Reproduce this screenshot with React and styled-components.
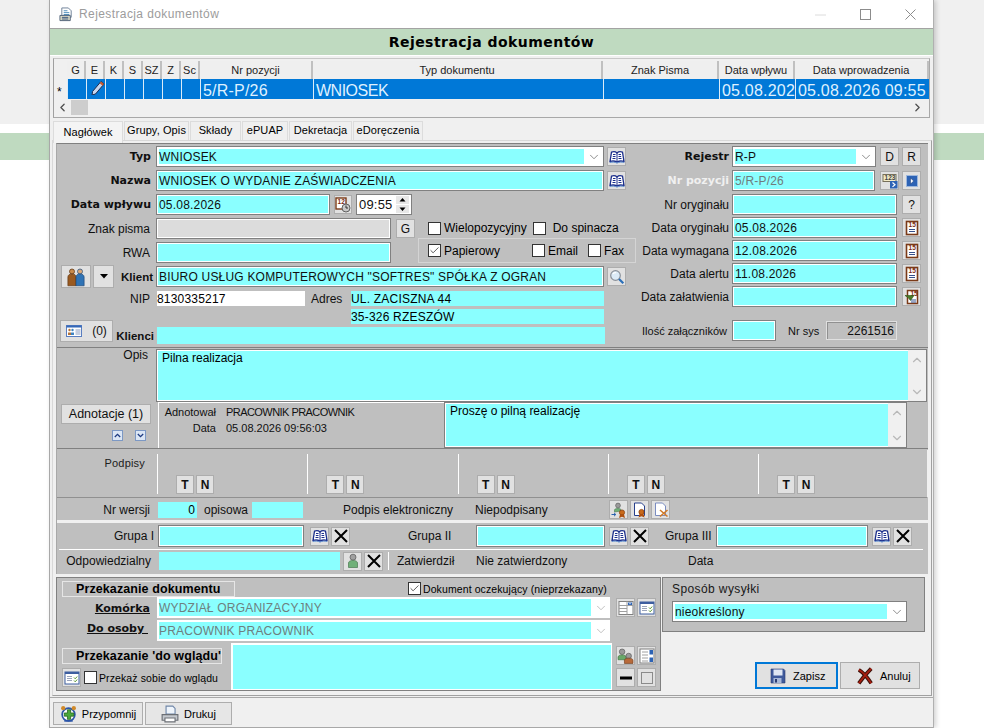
import styled, { createGlobalStyle } from "styled-components";
import { ChevronDown, ChevronUp, ChevronLeft, ChevronRight, Check } from "lucide-react";

const CYAN = "#8affff";
const GREY = "#bfbfbf";
const FONT = `"Liberation Sans", Arial, sans-serif`;

const Global = createGlobalStyle`
  html, body { margin: 0; padding: 0; background: #fff; overflow: hidden; }
  * { box-sizing: border-box; }
  body { font-family: ${FONT}; font-size: 12px; letter-spacing: .2px; color: #000; }
`;

/* ---------- icons ---------- */

const Svg = ({ size = 16, children }) => (
  <svg width={size} height={size} viewBox="0 0 16 16" fill="none">{children}</svg>
);

const BookIcon = () => (
  <Svg>
    <path d="M8 4C6.5 2.6 4 2.6 2.5 3.2L1 12.5c2.4-.8 5-.6 7 .6 2-1.2 4.6-1.4 7-.6L13.5 3.2C12 2.6 9.5 2.6 8 4z" fill="#fff" stroke="#1c2f8c" strokeWidth="1.3" />
    <path d="M8 4v9M4 5.5h2.5M3.8 7.5h2.7M3.5 9.5h3M9.5 5.5H12M9.5 7.5h2.7M9.5 9.5h3" stroke="#1c2f8c" />
    <path d="M1 13.5c2.5-.7 5-.4 7 .6 2-1 4.5-1.3 7-.6" stroke="#5f8fd0" />
  </Svg>
);

const CrossIcon = () => (
  <Svg>
    <path d="M2 2L14 14M14 2L2 14" stroke="#000" strokeWidth="2" />
  </Svg>
);

const TinyNum = ({ x, y, fill, children }) => (
  <text x={x} y={y} fontFamily="Liberation Sans" fontSize="6.5" fontWeight="700" letterSpacing="0" fill={fill}>{children}</text>
);

const CalendarIcon = () => (
  <Svg>
    <rect x="2.5" y="1.5" width="11" height="13" fill="#fff" stroke="#7a3a18" strokeWidth="1.6" />
    <TinyNum x={4.6} y={7.4} fill="#7a2a10">15</TinyNum>
    <path d="M5 9.5h6M5 11.5h6" stroke="#35508c" />
  </Svg>
);

const CalendarDoneIcon = () => (
  <Svg>
    <rect x="3.5" y="1.5" width="10" height="13" fill="#fff" stroke="#7a3a18" strokeWidth="1.5" />
    <TinyNum x={6.4} y={7} fill="#7a2a10">15</TinyNum>
    <path d="M7 11h5M7 13h5" stroke="#35508c" />
    <path d="M1 6.5h9l-3.5 5L4 8.5z" fill="#4b7a28" stroke="#2e5214" strokeWidth=".6" />
  </Svg>
);

const CalendarClockIcon = () => (
  <Svg>
    <rect x="1" y="1" width="10" height="11" fill="#fff" stroke="#7a3a18" strokeWidth="1.4" />
    <TinyNum x={2.6} y={7} fill="#7a2a10">12</TinyNum>
    <circle cx="11" cy="11" r="4" fill="#c8c8c8" stroke="#606060" />
    <path d="M11 8.5V11h2" stroke="#303030" />
  </Svg>
);

const NumberIcon = () => (
  <Svg>
    <rect x="1" y="1.5" width="13" height="7" fill="#f3ecc8" stroke="#77705a" />
    <TinyNum x={2.6} y={7} fill="#444">123</TinyNum>
    <rect x="8" y="8" width="7.5" height="7.5" fill="#2d63b5" />
    <path d="M10.5 9.5l2.5 2.2-2.5 2.2" stroke="#fff" strokeWidth="1.2" />
  </Svg>
);

const BlueNextIcon = () => (
  <Svg>
    <rect x="2.5" y="2.5" width="11" height="11" fill="#2d63b5" stroke="#9db7dc" />
    <path d="M6.5 5l3.2 3-3.2 3z" fill="#fff" stroke="#10306e" strokeWidth=".5" />
  </Svg>
);

const SearchIcon = () => (
  <Svg>
    <circle cx="6.5" cy="6.5" r="4.8" fill="#dcebf7" stroke="#8a9098" strokeWidth="1.2" />
    <path d="M4 5c.6-1.2 2-1.6 3.2-1.2" stroke="#fff" strokeWidth="1.2" />
    <path d="M10 10l4.3 4.3" stroke="#2b6fb8" strokeWidth="2.2" />
  </Svg>
);

const PeopleIcon = ({ size = 20 }) => (
  <Svg size={size}>
    <circle cx="4.8" cy="3.6" r="2" fill="#c98a4a" stroke="#5d3514" strokeWidth=".6" />
    <path d="M1.5 15V8c0-1.5 1.2-2.4 3.3-2.4S8 6.5 8 8v7z" fill="#9a5a20" stroke="#5d3514" strokeWidth=".5" />
    <circle cx="11.2" cy="3.6" r="2" fill="#d9a878" stroke="#244f80" strokeWidth=".6" />
    <path d="M8 15V8c0-1.5 1.2-2.4 3.2-2.4s3.3.9 3.3 2.4v7z" fill="#2f73b5" stroke="#1d4470" strokeWidth=".5" />
  </Svg>
);

const ClientCardIcon = () => (
  <Svg>
    <rect x=".5" y="2.5" width="15" height="11" fill="#fff" stroke="#5a7ec0" />
    <rect x=".5" y="2.5" width="15" height="2" fill="#3568b8" />
    <circle cx="3.5" cy="7" r="1.2" fill="#b5743a" />
    <path d="M2 12V9.5h3V12z" fill="#b5743a" />
    <circle cx="6.5" cy="7" r="1.2" fill="#3d83c2" />
    <path d="M5 12V9.5h3V12z" fill="#3d83c2" />
    <path d="M9.5 7h5M9.5 9h5M9.5 11h5" stroke="#8a9cc0" />
  </Svg>
);

const SmallArrowIcon = ({ down }) => (
  <svg width="11" height="11" viewBox="0 0 11 11" fill="none">
    <rect x=".5" y=".5" width="10" height="10" fill="#dbe6f5" stroke="#7c98c4" />
    <path d={down ? "M2.8 4l2.7 2.7L8.2 4" : "M2.8 7l2.7-2.7L8.2 7"} stroke="#1d3a80" strokeWidth="1.3" />
  </svg>
);

const Seal = ({ x, y }) => (
  <g>
    <circle cx={x} cy={y} r="2.6" fill="#c96a1c" stroke="#803a0c" strokeWidth=".7" />
    <path d={`M${x - 2} ${y + 2}l-1 3.4 3-1.2 3 1.2-1-3.4`} fill="#b0500f" />
  </g>
);

const SignUserIcon = () => (
  <Svg>
    <circle cx="7" cy="3.5" r="2.4" fill="#9a9a9a" stroke="#555" strokeWidth=".6" />
    <path d="M3.5 10V8c0-1 1.5-1.5 3.5-1.5S10 7 10 8v1z" fill="#70b078" stroke="#4a7a50" strokeWidth=".6" />
    <path d="M.5 12.5h4M3 10.8l1.8 1.7L3 14.2" stroke="#2760b0" strokeWidth="1" />
    <Seal x={11} y={10.5} />
  </Svg>
);

const SignDocIcon = () => (
  <Svg>
    <path d="M2.5 1h7l3 3v9.5h-10z" fill="#fff" stroke="#27408c" />
    <Seal x={9.5} y={10} />
  </Svg>
);

const UnsignDocIcon = () => (
  <Svg>
    <path d="M2.5 1h7l3 3v9.5h-10z" fill="#fff" stroke="#7a8cc0" />
    <path d="M7 8l7.5 6.5M14.5 8L7 14.5" stroke="#d07a28" strokeWidth="1.6" />
  </Svg>
);

const PersonIcon = () => (
  <Svg>
    <circle cx="8" cy="4.2" r="3" fill="#a0a0a0" stroke="#555" strokeWidth=".7" />
    <path d="M3.5 14.5V10c0-1.6 2-2.6 4.5-2.6s4.5 1 4.5 2.6v4.5z" fill="#70b078" stroke="#4a7a50" strokeWidth=".7" />
  </Svg>
);

const TwoPersonsIcon = () => (
  <Svg size={18}>
    <circle cx="4.8" cy="4" r="2.6" fill="#9a9a9a" stroke="#555" strokeWidth=".6" />
    <path d="M1 11.5V9c0-1.2 1.6-2 3.8-2s3.8.8 3.8 2v2.5z" fill="#68a868" stroke="#3f703f" strokeWidth=".6" />
    <circle cx="11" cy="8" r="2.6" fill="#9a9a9a" stroke="#555" strokeWidth=".6" />
    <path d="M7 15v-3c0-1.2 1.8-2 4-2s4 .8 4 2v3z" fill="#b86a3a" stroke="#703c1c" strokeWidth=".6" />
  </Svg>
);

const ListCheckIcon = () => (
  <Svg>
    <rect x="1" y="2" width="14" height="12" fill="#fff" stroke="#3d5ea0" />
    <rect x="1" y="2" width="14" height="2" fill="#3d5ea0" />
    <path d="M3 6.5h5M3 8.5h5M3 10.5h5" stroke="#9aa4bc" strokeWidth="1.2" />
    <path d="M10 7.5l1.2 1.3 2-2.3M10 10.5l1.2 1.3 2-2.3" stroke="#5a9a30" />
  </Svg>
);

const ComboListIcon = () => (
  <Svg>
    <rect x="1" y="1.5" width="14" height="13" fill="#fff" stroke="#808080" />
    <path d="M1 5.5h14M1 8.5h8M1 11.5h8M9 1.5v13" stroke="#a0a0a0" />
    <rect x="10" y="2.5" width="4" height="2.5" fill="#2d63b5" />
    <path d="M11 3.2h2l-1 1.2z" fill="#fff" />
  </Svg>
);

const SpinListIcon = () => (
  <Svg>
    <rect x="1" y="1" width="14" height="14" fill="#fff" stroke="#808080" />
    <path d="M3 4h6M3 7h6M3 10h6M3 13h6" stroke="#a0a0a0" />
    <rect x="10.5" y="2" width="3.5" height="4.5" fill="#2d63b5" />
    <rect x="10.5" y="9.5" width="3.5" height="4.5" fill="#2d63b5" />
  </Svg>
);

const MinusIcon = () => (
  <Svg><rect x="2" y="6.5" width="12" height="3" fill="#000" /></Svg>
);

const EmptyBoxIcon = () => (
  <Svg><rect x="2.5" y="2.5" width="11" height="11" stroke="#8a8a8a" /></Svg>
);

const FloppyIcon = () => (
  <Svg size={16}>
    <path d="M1 1h12.5L15 2.5V15H1z" fill="#3f5a9c" stroke="#2a3a70" strokeWidth=".6" />
    <rect x="3.5" y="1.5" width="9" height="6" fill="#dfe6f3" />
    <rect x="3.5" y="10" width="8" height="5" fill="#a8b8d8" />
    <rect x="5" y="11" width="2" height="3.5" fill="#2a3a70" />
  </Svg>
);

const RedCrossIcon = () => (
  <Svg size={18}>
    <path d="M2.5 2.5C7 5 10 9 13.5 14.5M13.5 1.5C10 5 6 9.5 2.5 14.5" stroke="#3c1008" strokeWidth="3.4" />
    <path d="M2.5 2.5C7 5 10 9 13.5 14.5M13.5 1.5C10 5 6 9.5 2.5 14.5" stroke="#a81e10" strokeWidth="1.6" />
  </Svg>
);

const ReminderIcon = () => (
  <Svg size={17}>
    <circle cx="8" cy="9" r="6" fill="#ffffff" stroke="#2b55a8" strokeWidth="1.6" />
    <circle cx="3" cy="3" r="2" fill="#d08a2a" />
    <circle cx="13" cy="3" r="2" fill="#d08a2a" />
    <path d="M4 7.5h3V4.5h3v3h3v3h-3v3H7v-3H4z" fill="#4aa83c" stroke="#1e5c18" strokeWidth=".7" />
    <path d="M4 15h8" stroke="#2b55a8" strokeWidth="1.4" />
  </Svg>
);

const PrinterIcon = () => (
  <Svg size={18}>
    <path d="M4.5 1h6l2 2v5h-8z" fill="#eef4fb" stroke="#6f86a8" />
    <path d="M1 8.5h14v5H1z" fill="#c4c8ce" stroke="#6b6f75" />
    <path d="M3.5 11.5h9v3.5h-9z" fill="#fff" stroke="#6b6f75" />
  </Svg>
);

const TitleDocIcon = () => (
  <Svg size={15}>
    <path d="M3 1h7l3 3v7H3z" fill="#fff" stroke="#6c7f96" />
    <path d="M5 4h4M5 6h6M5 8h6" stroke="#4a8ab8" />
    <path d="M1 9h11v5.5H1z" fill="#e6e2c8" stroke="#4d5f78" />
    <path d="M3 11h7M3 12.8h7" stroke="#2a4a78" />
  </Svg>
);

/* ---------- window chrome ---------- */

const Desktop = styled.div`
  width: 984px;
  height: 728px;
  padding-left: 49px;
  overflow: hidden;
  background: linear-gradient(#f0f0f0 0 124px, #fff 124px 133px, #bfdac0 133px 160px, #fff 160px);
`;

const Window = styled.div`
  width: 885px;
  height: 728px;
  display: flex;
  flex-direction: column;
  background: #f0f0f0;
  border-left: 1px solid #a8a8a8;
  border-right: 1px solid #b0b0b0;
  box-shadow: 2px 0 5px rgba(0, 0, 0, .18);
`;

const TitleBar = styled.div`
  height: 28px;
  flex: none;
  display: flex;
  align-items: center;
  padding-left: 9px;
  background: #fff;
  color: #9c9c9c;
  letter-spacing: .4px;
`;

const TitleText = styled.span`
  margin-left: 5px;
  flex: 1;
`;

const WinControls = styled.div`
  display: flex;
  align-items: center;
  width: 118px;
  gap: 34px;
`;

const Header = styled.div`
  height: 28px;
  flex: none;
  display: flex;
  align-items: center;
  justify-content: center;
  padding-bottom: 1px;
  background: #bfdac0;
  border-top: 1px solid #a3a3a3;
  border-bottom: 1px solid #fff;
  font-family: "DejaVu Sans", sans-serif;
  font-weight: 700;
  font-size: 14px;
  letter-spacing: .45px;
`;

const GridWrap = styled.div`
  margin: 2px 3px 0 3px;
  height: 60px;
  flex: none;
  padding: 2px 0 0 0;
  background: #f0f0f0;
  border: 1px solid #a8a8a8;
  border-top: 1px solid #c8c8c8;
  border-left: 1px solid #a0a0a0;
  display: flex;
  flex-direction: column;
`;

const GridRow = styled.div`
  display: grid;
  grid-template-columns: 13px repeat(7, 19px) 113px 290px 116px 76px 134px;
  height: ${(p) => p.$h}px;
  flex: none;
`;

const HeadCell = styled.div`
  display: flex;
  align-items: center;
  justify-content: center;
  overflow: hidden;
  white-space: nowrap;
  background: #efefef;
  border-right: 2px solid #c0c0c0;
  font-size: 11px;
  letter-spacing: 0;
  color: #222;
`;

const Blank = styled.div``;

const Marker = styled.div`
  padding: 6px 0 0 3px;
  font-size: 12px;
  line-height: 14px;
`;

const DataCell = styled.div`
  background: #0078d7;
  border-left: 1px solid #dcecf8;
  color: #dff1ff;
  font-size: 16px;
  padding-left: 2px;
  line-height: 24px;
  height: 20px;
  white-space: nowrap;
  overflow: hidden;
  letter-spacing: ${(p) => (p.$tight ? "-.5px" : ".2px")};
`;

const PencilSvg = styled.svg`
  display: block;
  margin: 1px 0 0 2px;
`;

const HScroll = styled.div`
  height: 16px;
  display: flex;
  align-items: center;
  padding: 0 5px 0 2px;
  color: #505050;
`;

const Thumb = styled.div`
  width: 17px;
  height: 15px;
  background: #cdcdcd;
  margin-left: 2px;
  flex: none;
`;

const Fill = styled.div`
  flex: 1;
`;

const Tabs = styled.div`
  display: flex;
  height: 22px;
  flex: none;
  padding: 2px 0 0 3px;
  align-items: flex-end;
`;

const Tab = styled.div`
  display: flex;
  align-items: center;
  justify-content: center;
  width: ${(p) => p.$w}px;
  height: ${(p) => (p.$active ? 22 : 19)}px;
  margin-right: 1px;
  background: ${(p) => (p.$active ? "#f4f4f4" : "#efefef")};
  border: 1px solid #dcdcdc;
  border-bottom: none;
  margin-bottom: ${(p) => (p.$active ? -3 : 0)}px;
  z-index: ${(p) => (p.$active ? 1 : 0)};
  font-size: 11px;
  letter-spacing: .1px;
  padding-bottom: 2px;
`;

const TabBody = styled.div`
  margin: 0 1px 0 2px;
  flex: none;
  height: 556px;
  padding: 2px 3px 0 3px;
  border: 1px solid #d8d8d8;
  border-right: 1px solid #a0a0a0;
  border-bottom: 1px solid #a0a0a0;
  background: #f0f0f0;
`;

const Footer = styled.div`
  flex: 1;
  display: flex;
  gap: 2px;
  padding: 4px 0 0 3px;
  border-top: 1px solid #a8a8a8;
  border-bottom: 1px solid #a8a8a8;
  margin-top: 1px;
`;

const FooterBtn = styled.button`
  width: ${(p) => p.$w}px;
  height: 23px;
  display: flex;
  align-items: center;
  justify-content: center;
  gap: 5px;
  padding: 0;
  background: #e6e6e6;
  border: 1px solid #adadad;
  font: inherit;
  font-size: 11px;
  letter-spacing: 0;
`;

/* ---------- form parts ---------- */

const FormPanel = styled.div`
  height: 431px;
  background: ${GREY};
  border-top: 1px solid #808080;
  border-left: 1px solid #a8a8a8;
  display: flex;
  flex-direction: column;
`;

const TopArea = styled.div`
  height: 203px;
  flex: none;
  display: flex;
  padding-top: 2px;
`;

const LeftCol = styled.div`
  width: 573px;
  flex: none;
`;

const RightCol = styled.div`
  flex: 1;
`;

const Row = styled.div`
  display: flex;
  align-items: ${(p) => p.$align || "center"};
  height: ${(p) => p.$h || 21}px;
  margin-top: ${(p) => p.$mt || 0}px;
`;

const Label = styled.div`
  flex: none;
  width: ${(p) => p.$w}px;
  margin-left: ${(p) => p.$ml || 0}px;
  margin-right: ${(p) => (p.$mr === undefined ? 6 : p.$mr)}px;
  padding-top: ${(p) => p.$pt || 0}px;
  padding-bottom: ${(p) => p.$pb || 0}px;
  text-align: ${(p) => p.$ta || "right"};
  white-space: nowrap;
  color: ${(p) => p.$color || "#101010"};
  font-size: ${(p) => p.$fs || 12}px;
  letter-spacing: 0;
`;

const BoldLabel = styled(Label)`
  font-family: ${(p) => (p.$small ? FONT : `"DejaVu Sans", sans-serif`)};
  font-size: ${(p) => (p.$small ? 11.5 : 11)}px;
  font-weight: 700;
  text-decoration: ${(p) => (p.$u ? "underline" : "none")};
`;

const OpisLabel = styled(Label)`
  line-height: 12px;
`;

const Field = styled.div`
  flex: none;
  width: ${(p) => p.$w}px;
  height: ${(p) => (p.$h ? `${p.$h}px` : "100%")};
  margin-left: ${(p) => p.$ml || 0}px;
  padding: 0 0 0 2px;
  background: ${(p) => p.$bg || CYAN};
  border: 1px solid #808080;
  box-shadow: inset 0 0 0 1px #fff;
  display: flex;
  align-items: center;
  white-space: nowrap;
  overflow: hidden;
  color: ${(p) => p.$color || "#101010"};
`;

const SysField = styled(Field)`
  border-color: #e0e0e0;
  box-shadow: inset 1px 1px 0 #909090;
  letter-spacing: 0;
  padding-right: 2px;
  justify-content: flex-end;
`;

const FlatField = styled.div`
  flex: none;
  width: ${(p) => p.$w}px;
  height: 100%;
  margin-left: ${(p) => p.$ml || 0}px;
  padding: 0 ${(p) => (p.$right ? 2 : 0)}px;
  background: ${(p) => p.$bg || CYAN};
  display: flex;
  align-items: center;
  justify-content: ${(p) => (p.$right ? "flex-end" : "flex-start")};
  white-space: nowrap;
`;

const Combo = styled.div`
  flex: none;
  width: ${(p) => p.$w}px;
  height: 100%;
  margin-left: ${(p) => p.$ml || 0}px;
  padding: 2px 0 2px 2px;
  display: flex;
  background: #fff;
  border: ${(p) => (p.$flat ? "0" : "1px solid #808080")};
`;

const ComboValue = styled.div`
  flex: 1;
  display: flex;
  align-items: center;
  background: ${CYAN};
  white-space: nowrap;
  color: ${(p) => p.$color || "#101010"};
`;

const TimeValue = styled(ComboValue)`
  background: #fff;
  font-size: 13px;
`;

const ComboArrow = styled.div`
  width: 19px;
  flex: none;
  display: flex;
  align-items: center;
  justify-content: center;
  color: ${(p) => p.$color || "#606060"};
`;

const IconBtn = styled.button`
  flex: none;
  width: ${(p) => p.$w || 19}px;
  height: ${(p) => p.$h || 19}px;
  margin-left: ${(p) => p.$ml || 0}px;
  padding: 0;
  display: flex;
  align-items: center;
  justify-content: center;
  gap: ${(p) => p.$gap || 0}px;
  background: #e1e1e1;
  border: 1px solid #adadad;
  font: inherit;
  font-size: ${(p) => p.$fs || 12}px;
  font-weight: ${(p) => (p.$bold ? 700 : 400)};
  color: #101010;
`;

const TinyBtn = styled.div`
  width: 11px;
  height: 11px;
  display: flex;
`;

const CheckItem = styled.label`
  display: flex;
  align-items: center;
  gap: ${(p) => p.$gap || 3}px;
  margin-left: ${(p) => p.$ml || 0}px;
  white-space: nowrap;
  font-size: ${(p) => p.$fs || 12}px;
  letter-spacing: ${(p) => (p.$fs ? ".1px" : "0")};
`;

const CheckBox = styled.span`
  width: 13px;
  height: 13px;
  flex: none;
  display: flex;
  align-items: center;
  justify-content: center;
  background: #fff;
  border: 1px solid #333;
`;

const Split = styled.div`
  display: flex;
  margin-top: 3px;
  height: 45px;
`;

const SplitFields = styled.div`
  width: 361px;
  flex: none;
  display: flex;
  flex-direction: column;
  gap: 3px;
`;

const SplitOptions = styled.div`
  flex: 1;
  display: flex;
  flex-direction: column;
`;

const OptionsLine = styled.div`
  height: 20px;
  flex: none;
  display: flex;
  align-items: center;
  padding-left: 10px;
`;

const OptionsBox = styled.div`
  width: 218px;
  height: 25px;
  display: flex;
  align-items: center;
  padding-left: 9px;
  border: 1px solid #d4d4d4;
`;

const ClientBlock = styled.div`
  display: flex;
  margin-top: 3px;
`;

const ClientSide = styled.div`
  flex: none;
  width: 57px;
  padding: 11px 0 0 3px;
`;

const ClientStack = styled.div`
  display: flex;
  flex-direction: column;
  gap: 3px;
`;

const OpisSection = styled.div`
  height: 55px;
  flex: none;
  display: flex;
  padding-top: 1px;
  border-top: 1px solid #808080;
`;

const TextBox = styled.div`
  flex: none;
  width: ${(p) => p.$w}px;
  display: flex;
  background: #fff;
  border: 1px solid #808080;
`;

const TextArea = styled.div`
  flex: 1;
  padding: 0 4px;
  background: ${CYAN};
  border-top: 1px solid #fff;
  border-left: 1px solid #fff;
  border-bottom: 1px solid #fff;
  letter-spacing: 0;
`;

const VScroll = styled.div`
  width: 18px;
  flex: none;
  display: flex;
  flex-direction: column;
  justify-content: space-between;
  align-items: center;
  padding: 3px 0 2px;
  background: #f0f0f0;
  color: #b8b8b8;
`;

const AnnotSection = styled.div`
  height: 47px;
  flex: none;
  display: flex;
  border-bottom: 1px solid #808080;
`;

const AnnotSide = styled.div`
  width: 101px;
  flex: none;
  padding: 2px 0 0 4px;
`;

const AnnotArrows = styled.div`
  display: flex;
  justify-content: flex-end;
  gap: 12px;
  padding: 6px 12px 0 0;
`;

const AnnotInfo = styled.div`
  width: 286px;
  flex: none;
  padding: 3px 0 0 5px;
  border-left: 1px solid #fff;
  border-top: 1px solid #fff;
  display: grid;
  grid-template-columns: 52px 1fr;
  grid-auto-rows: 16px;
  column-gap: 10px;
  font-size: 11px;
  letter-spacing: 0;
  color: #101010;
`;

const AnnotKey = styled.div`
  text-align: right;
`;

const AnnotName = styled.div`
  letter-spacing: -.55px;
`;

const PodpisySection = styled.div`
  height: 48px;
  flex: none;
  margin-top: 1px;
  display: flex;
  border-bottom: 1px solid #909090;
  border-right: 1px solid #f0f0f0;
`;

const PodpisyLabel = styled.div`
  width: 88px;
  flex: none;
  padding-top: 7px;
  text-align: right;
  font-size: 11px;
  color: #202020;
`;

const SignCols = styled.div`
  flex: 1;
  margin-left: 12px;
  display: grid;
  grid-template-columns: repeat(5, 150.3px);
  padding-top: 4px;
`;

const SignCol = styled.div`
  height: 40px;
  padding: 21px 0 0 18px;
  border-left: 1px solid #fff;
  display: flex;
  gap: 2px;
`;

const WersjaSection = styled.div`
  height: 22px;
  flex: none;
  display: flex;
  align-items: center;
  padding-top: 1px;
`;

const PlainText = styled.div`
  flex: none;
  width: ${(p) => p.$w}px;
  margin-left: ${(p) => p.$ml || 0}px;
  white-space: nowrap;
  letter-spacing: 0;
  font-size: ${(p) => p.$fs || 12}px;
  color: #101010;
`;

const IconGroup = styled.div`
  display: flex;
  gap: 2px;
  margin-left: ${(p) => p.$ml || 0}px;
`;

const GrupySection = styled.div`
  height: 29px;
  flex: none;
  display: flex;
  align-items: center;
  border-top: 3px solid #f0f0f0;
`;

const OdpSection = styled.div`
  flex: 1;
  display: flex;
  align-items: center;
  padding-bottom: 2px;
  border-top: 1px solid #fff;
  margin: 0 5px 0 2px;
`;

const Divider = styled.div`
  width: 1px;
  height: 18px;
  background: #fff;
  margin-left: 5px;
`;

const BottomArea = styled.div`
  display: flex;
  margin-top: 3px;
  height: 114px;
`;

const TransferPanel = styled.div`
  width: 605px;
  flex: none;
  background: ${GREY};
  border: 1px solid #808080;
  padding: 2px 0 0 5px;
`;

const SectionBox = styled.div`
  width: ${(p) => p.$w}px;
  height: 16px;
  flex: none;
  padding-left: 13px;
  overflow: hidden;
  border: 1px solid #e6e6e6;
  font-weight: 700;
  font-size: 12.5px;
  line-height: 15px;
  white-space: nowrap;
  letter-spacing: .1px;
`;

const WglaSection = styled.div`
  display: flex;
  margin-top: 2px;
  height: 47px;
`;

const WglaLeft = styled.div`
  width: 169px;
  flex: none;
  padding-top: 5px;
`;

const WglaLine = styled.div`
  display: flex;
  align-items: center;
  margin-top: 4px;
`;

const WglaField = styled.div`
  width: 381px;
  height: 47px;
  flex: none;
  background: ${CYAN};
  border: 1px solid #fff;
  border-left: 2px solid #fff;
  border-top: 2px solid #fff;
`;

const WglaBtns = styled.div`
  margin-left: 4px;
  display: grid;
  grid-template-columns: 19px 19px;
  column-gap: 2px;
  row-gap: 3px;
  padding-top: 3px;
  grid-auto-rows: 19px;
`;

const SideCol = styled.div`
  flex: 1;
  margin-left: 1px;
  display: flex;
  flex-direction: column;
  justify-content: space-between;
  padding-bottom: 2px;
`;

const SendBox = styled.div`
  width: 263px;
  height: 55px;
  padding: 4px 0 0 9px;
  background: ${GREY};
  border: 1px solid #808080;
`;

const SendLabel = styled.div`
  height: 19px;
  color: #181818;
  letter-spacing: .4px;
`;

const SendCombo = styled(Combo)`
  height: 21px;
`;

const Actions = styled.div`
  display: flex;
  gap: 2px;
  padding-left: 93px;
`;

const ActionBtn = styled.button`
  width: ${(p) => p.$w}px;
  height: 27px;
  padding: 0 0 0 ${(p) => p.$pl}px;
  display: flex;
  align-items: center;
  gap: ${(p) => p.$gap}px;
  background: #e1e1e1;
  border: ${(p) => (p.$primary ? "2px solid #0078d7" : "1px solid #adadad")};
  font: inherit;
  font-size: 11px;
  letter-spacing: 0;
`;

/* ---------- small compositions ---------- */

const Tick = ({ on }) => (
  <CheckBox>{on && <Check size={11} strokeWidth={1.6} color="#222" />}</CheckBox>
);

const Chevron = ({ color }) => (
  <ComboArrow $color={color}><ChevronDown size={14} strokeWidth={1.2} /></ComboArrow>
);

const Lookup = ({ ml }) => (
  <IconGroup $ml={ml}>
    <IconBtn><BookIcon /></IconBtn>
    <IconBtn><CrossIcon /></IconBtn>
  </IconGroup>
);

const columns = ["G", "E", "K", "S", "SZ", "Z", "Sc", "Nr pozycji", "Typ dokumentu", "Znak Pisma", "Data wpływu", "Data wprowadzenia"];
const tabs = [["Nagłówek", 70, true], ["Grupy, Opis", 65], ["Składy", 51], ["ePUAP", 46], ["Dekretacja", 63], ["eDoręczenia", 70]];
const dateRows = [["Data oryginału", "05.08.2026"], ["Data wymagana", "12.08.2026"], ["Data alertu", "11.08.2026"]];

export default function App() {
  return (
    <Desktop>
      <Global />
      <Window>
        <TitleBar>
          <TitleDocIcon />
          <TitleText>Rejestracja dokumentów</TitleText>
          <WinControls>
            <svg width="11" height="11" viewBox="0 0 11 11"><path d="M0 6h11" stroke="#dcdcdc" /></svg>
            <svg width="11" height="11" viewBox="0 0 11 11" fill="none"><rect x=".5" y=".5" width="10" height="10" stroke="#8c8c8c" /></svg>
            <svg width="11" height="11" viewBox="0 0 11 11" fill="none"><path d="M.5.5l10 10M10.5.5l-10 10" stroke="#8c8c8c" /></svg>
          </WinControls>
        </TitleBar>
        <Header>Rejestracja dokumentów</Header>

        <GridWrap>
          <GridRow $h={18}>
            <Blank />
            {columns.map((c) => <HeadCell key={c}>{c}</HeadCell>)}
          </GridRow>
          <GridRow $h={20}>
            <Marker>*</Marker>
            <DataCell />
            <DataCell>
              <PencilSvg width="14" height="15" viewBox="0 0 14 15" fill="none">
                <path d="M1.5 11.5L10 1.5l3 2.5-8.5 10-3.4 1z" fill="#c6d6ee" stroke="#1b2a50" />
                <path d="M10 1.5l3 2.5-1.4 1.7-3-2.5z" fill="#c65a30" />
              </PencilSvg>
            </DataCell>
            <DataCell /><DataCell /><DataCell /><DataCell /><DataCell />
            <DataCell>5/R-P/26</DataCell>
            <DataCell $tight>WNIOSEK</DataCell>
            <DataCell />
            <DataCell>05.08.2026</DataCell>
            <DataCell>05.08.2026 09:55</DataCell>
          </GridRow>
          <HScroll>
            <ChevronLeft size={13} strokeWidth={2.4} />
            <Thumb />
            <Fill />
            <ChevronRight size={13} strokeWidth={2.4} />
          </HScroll>
        </GridWrap>

        <Tabs>
          {tabs.map(([name, w, active]) => <Tab key={name} $w={w} $active={active}>{name}</Tab>)}
        </Tabs>

        <TabBody>
          <FormPanel>
            <TopArea>
              <LeftCol>
                <Row>
                  <BoldLabel $w={94} $mr={5}>Typ</BoldLabel>
                  <Combo $w={448}>
                    <ComboValue>WNIOSEK</ComboValue>
                    <Chevron />
                  </Combo>
                  <IconBtn $ml={3}><BookIcon /></IconBtn>
                </Row>
                <Row $mt={3}>
                  <BoldLabel $w={94} $mr={5}>Nazwa</BoldLabel>
                  <Field $w={448}>WNIOSEK O WYDANIE ZAŚWIADCZENIA</Field>
                  <IconBtn $ml={3}><BookIcon /></IconBtn>
                </Row>
                <Row $mt={3}>
                  <BoldLabel $w={94} $mr={5}>Data wpływu</BoldLabel>
                  <Field $w={174}>05.08.2026</Field>
                  <IconBtn $w={18} $ml={4}><CalendarClockIcon /></IconBtn>
                  <Combo $w={56} $ml={4}>
                    <TimeValue>09:55</TimeValue>
                    <ComboArrow>
                      <svg width="13" height="17" viewBox="0 0 13 17">
                        <rect width="13" height="8" fill="#e8e8e8" />
                        <rect y="9" width="13" height="8" fill="#e8e8e8" />
                        <path d="M6.5 2l3 3.5h-6zM6.5 15l3-3.5h-6z" fill="#000" />
                      </svg>
                    </ComboArrow>
                  </Combo>
                </Row>
                <Split>
                  <SplitFields>
                    <Row>
                      <Label $w={93}>Znak pisma</Label>
                      <Field $w={235} $bg="#dcdcdc" />
                      <IconBtn $ml={5}>G</IconBtn>
                    </Row>
                    <Row>
                      <Label $w={93}>RWA</Label>
                      <Field $w={235} />
                    </Row>
                  </SplitFields>
                  <SplitOptions>
                    <OptionsLine>
                      <CheckItem><Tick />Wielopozycyjny</CheckItem>
                      <CheckItem $ml={6} $gap={7}><Tick />Do spinacza</CheckItem>
                    </OptionsLine>
                    <OptionsBox>
                      <CheckItem><Tick on />Papierowy</CheckItem>
                      <CheckItem $ml={32}><Tick />Email</CheckItem>
                      <CheckItem $ml={10}><Tick />Fax</CheckItem>
                    </OptionsBox>
                  </SplitOptions>
                </Split>
                <Row $mt={3}>
                  <IconBtn $w={30} $h={23} $ml={4}><PeopleIcon /></IconBtn>
                  <IconBtn $w={21} $h={23} $ml={2}>
                    <svg width="8" height="5" viewBox="0 0 8 5"><path d="M0 0h8L4 4.5z" fill="#000" /></svg>
                  </IconBtn>
                  <BoldLabel $small $w={39} $mr={3}>Klient</BoldLabel>
                  <Field $w={448}>BIURO USŁUG KOMPUTEROWYCH "SOFTRES" SPÓŁKA Z OGRAN</Field>
                  <IconBtn $ml={3}><SearchIcon /></IconBtn>
                </Row>
                <Row $h={15} $mt={4}>
                  <Label $w={93}>NIP</Label>
                  <FlatField $w={148} $ml={1} $bg="#fff">8130335217</FlatField>
                  <PlainText $w={40} $ml={6}>Adres</PlainText>
                  <FlatField $w={253}>UL. ZACISZNA 44</FlatField>
                </Row>
                <ClientBlock>
                  <ClientSide>
                    <IconBtn $w={53} $h={22} $gap={10}><ClientCardIcon />(0)</IconBtn>
                  </ClientSide>
                  <ClientStack>
                    <Row $h={15}>
                      <FlatField $w={253} $ml={237}>35-326 RZESZÓW</FlatField>
                    </Row>
                    <Row $h={17}>
                      <BoldLabel $small $w={40} $mr={3}>Klienci</BoldLabel>
                      <FlatField $w={448} />
                    </Row>
                  </ClientStack>
                </ClientBlock>
              </LeftCol>

              <RightCol>
                <Row>
                  <BoldLabel $w={99} $mr={3}>Rejestr</BoldLabel>
                  <Combo $w={144}>
                    <ComboValue>R-P</ComboValue>
                    <Chevron />
                  </Combo>
                  <IconBtn $ml={4}>D</IconBtn>
                  <IconBtn $ml={3}>R</IconBtn>
                </Row>
                <Row $mt={3}>
                  <BoldLabel $w={99} $mr={3} $color="#f0f0f0">Nr pozycji</BoldLabel>
                  <Field $w={143} $color="#707c7c">5/R-P/26</Field>
                  <IconBtn $ml={5}><NumberIcon /></IconBtn>
                  <IconBtn $ml={3}><BlueNextIcon /></IconBtn>
                </Row>
                <Row $mt={3}>
                  <Label $w={99} $mr={3}>Nr oryginału</Label>
                  <Field $w={165} />
                  <IconBtn $ml={5}>?</IconBtn>
                </Row>
                {dateRows.map(([label, value]) => (
                  <Row $mt={2} key={label}>
                    <Label $w={99} $mr={3}>{label}</Label>
                    <Field $w={165}>{value}</Field>
                    <IconBtn $ml={5}><CalendarIcon /></IconBtn>
                  </Row>
                ))}
                <Row $mt={2}>
                  <Label $w={99} $mr={3}>Data załatwienia</Label>
                  <Field $w={165} />
                  <IconBtn $ml={5}><CalendarDoneIcon /></IconBtn>
                </Row>
                <Row $mt={13}>
                  <Label $w={97} $mr={5} $fs={11}>Ilość załączników</Label>
                  <Field $w={44} />
                  <PlainText $w={38} $ml={12} $fs={11}>Nr sys</PlainText>
                  <SysField $w={71} $h={19} $bg={GREY}>2261516</SysField>
                </Row>
              </RightCol>
            </TopArea>

            <OpisSection>
              <OpisLabel $w={91} $mr={8}>Opis</OpisLabel>
              <TextBox $w={771}>
                <TextArea>Pilna realizacja</TextArea>
                <VScroll>
                  <ChevronUp size={14} /><ChevronDown size={14} />
                </VScroll>
              </TextBox>
            </OpisSection>

            <AnnotSection>
              <AnnotSide>
                <IconBtn $w={90} $h={20} $fs={12.5}>Adnotacje (1)</IconBtn>
                <AnnotArrows>
                  <TinyBtn><SmallArrowIcon /></TinyBtn>
                  <TinyBtn><SmallArrowIcon down /></TinyBtn>
                </AnnotArrows>
              </AnnotSide>
              <AnnotInfo>
                <AnnotKey>Adnotował</AnnotKey><AnnotName>PRACOWNIK PRACOWNIK</AnnotName>
                <AnnotKey>Data</AnnotKey><div>05.08.2026 09:56:03</div>
              </AnnotInfo>
              <TextBox $w={463}>
                <TextArea>Proszę o pilną realizację</TextArea>
                <VScroll>
                  <ChevronUp size={14} /><ChevronDown size={14} />
                </VScroll>
              </TextBox>
            </AnnotSection>

            <PodpisySection>
              <PodpisyLabel>Podpisy</PodpisyLabel>
              <SignCols>
                {[0, 1, 2, 3, 4].map((i) => (
                  <SignCol key={i}>
                    <IconBtn $w={18} $bold>T</IconBtn>
                    <IconBtn $w={18} $bold>N</IconBtn>
                  </SignCol>
                ))}
              </SignCols>
            </PodpisySection>

            <WersjaSection>
              <Label $w={93} $mr={8}>Nr wersji</Label>
              <Row $h={16}>
                <FlatField $w={39} $right>0</FlatField>
                <PlainText $w={48} $ml={7}>opisowa</PlainText>
                <FlatField $w={51} />
              </Row>
              <PlainText $w={132} $ml={40}>Podpis elektroniczny</PlainText>
              <PlainText $w={134}>Niepodpisany</PlainText>
              <IconGroup>
                <IconBtn><SignUserIcon /></IconBtn>
                <IconBtn><SignDocIcon /></IconBtn>
                <IconBtn><UnsignDocIcon /></IconBtn>
              </IconGroup>
            </WersjaSection>

            <GrupySection>
              <Label $w={97} $mr={4}>Grupa I</Label>
              <Field $w={146} $h={22} />
              <Lookup ml={6} />
              <PlainText $w={68} $ml={58}>Grupa II</PlainText>
              <Field $w={129} $h={22} />
              <Lookup ml={4} />
              <PlainText $w={51} $ml={16}>Grupa III</PlainText>
              <Field $w={152} $h={22} />
              <Lookup ml={4} />
            </GrupySection>

            <OdpSection>
              <Label $w={92} $mr={8}>Odpowiedzialny</Label>
              <Row $h={18}>
                <FlatField $w={181} />
              </Row>
              <IconGroup $ml={3}>
                <IconBtn><PersonIcon /></IconBtn>
                <IconBtn><CrossIcon /></IconBtn>
              </IconGroup>
              <Divider />
              <PlainText $w={79} $ml={8}>Zatwierdził</PlainText>
              <PlainText $w={212}>Nie zatwierdzony</PlainText>
              <PlainText $w={30}>Data</PlainText>
            </OdpSection>
          </FormPanel>

          <BottomArea>
            <TransferPanel>
              <Row $h={17}>
                <SectionBox $w={173}>Przekazanie dokumentu</SectionBox>
                <CheckItem $ml={173} $gap={2} $fs={10.5}><Tick on />Dokument oczekujący (nieprzekazany)</CheckItem>
              </Row>
              <Row>
                <BoldLabel $w={88} $mr={7} $u $pt={2}>Komórka</BoldLabel>
                <Combo $w={453} $flat>
                  <ComboValue $color="#6e8080">WYDZIAŁ ORGANIZACYJNY</ComboValue>
                  <Chevron color="#a8a8a8" />
                </Combo>
                <IconBtn $ml={6}><ComboListIcon /></IconBtn>
                <IconBtn $ml={2}><ListCheckIcon /></IconBtn>
              </Row>
              <Row $mt={2}>
                <BoldLabel $w={86} $mr={9} $u $pb={4}>Do osoby&nbsp;</BoldLabel>
                <Combo $w={453} $flat>
                  <ComboValue $color="#6e8080">PRACOWNIK PRACOWNIK</ComboValue>
                  <Chevron color="#a8a8a8" />
                </Combo>
              </Row>
              <WglaSection>
                <WglaLeft>
                  <SectionBox $w={160}>Przekazanie 'do wglądu'</SectionBox>
                  <WglaLine>
                    <IconBtn><ListCheckIcon /></IconBtn>
                    <CheckItem $ml={3} $gap={2} $fs={10.5}><Tick />Przekaż sobie do wglądu</CheckItem>
                  </WglaLine>
                </WglaLeft>
                <WglaField />
                <WglaBtns>
                  <IconBtn><TwoPersonsIcon /></IconBtn>
                  <IconBtn><SpinListIcon /></IconBtn>
                  <IconBtn><MinusIcon /></IconBtn>
                  <IconBtn><EmptyBoxIcon /></IconBtn>
                </WglaBtns>
              </WglaSection>
            </TransferPanel>
            <SideCol>
              <SendBox>
                <SendLabel>Sposób wysyłki</SendLabel>
                <SendCombo $w={235}>
                  <ComboValue>nieokreślony</ComboValue>
                  <Chevron />
                </SendCombo>
              </SendBox>
              <Actions>
                <ActionBtn $w={83} $primary $pl={13} $gap={7}><FloppyIcon />Zapisz</ActionBtn>
                <ActionBtn $w={80} $pl={15} $gap={6}><RedCrossIcon />Anuluj</ActionBtn>
              </Actions>
            </SideCol>
          </BottomArea>
        </TabBody>

        <Footer>
          <FooterBtn $w={90}><ReminderIcon />Przypomnij</FooterBtn>
          <FooterBtn $w={87}><PrinterIcon />Drukuj</FooterBtn>
        </Footer>
      </Window>
    </Desktop>
  );
}
